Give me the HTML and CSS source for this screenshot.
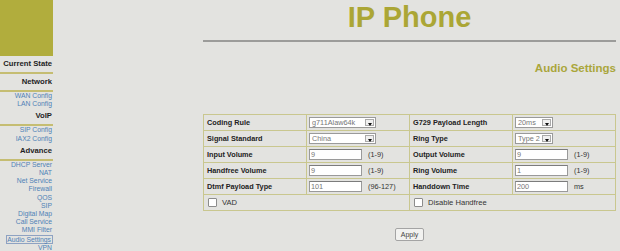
FILE: index.html
```html
<!doctype html>
<html>
<head>
<meta charset="utf-8">
<title>IP Phone</title>
<link rel="stylesheet" href="styles.css">
</head>

<body>
	<div class="page">
		<div class="side">
			<div class="logo"></div>
			<div class="head">Current State</div>
			<div class="head">Network</div>
			<ul class="links">
				<li><a href="javascript:;">WAN Config</a></li>
				<li><a href="javascript:;">LAN Config</a></li>
			</ul>
			<div class="head">VoIP</div>
			<ul class="links">
				<li><a href="javascript:;">SIP Config</a></li>
				<li><a href="javascript:;">IAX2 Config</a></li>
			</ul>
			<div class="head">Advance</div>
			<ul class="links">
				<li><a href="javascript:;">DHCP Server</a></li>
				<li><a href="javascript:;">NAT</a></li>
				<li><a href="javascript:;">Net Service</a></li>
				<li><a href="javascript:;">Firewall</a></li>
				<li><a href="javascript:;">QOS</a></li>
				<li><a href="javascript:;">SIP</a></li>
				<li><a href="javascript:;">Digital Map</a></li>
				<li><a href="javascript:;">Call Service</a></li>
				<li><a href="javascript:;">MMI Filter</a></li>
				<li><a href="javascript:;" class="on">Audio Settings</a></li>
				<li><a href="javascript:;">VPN</a></li>
			</ul>
		</div>
		<div class="main">
			<h1 class="title">IP Phone</h1>
			<div class="rule"></div>
			<h2 class="sub">Audio Settings</h2>
			<table class="form">
				<tr>
					<th>Coding Rule</th>
					<td><span class="sel w67"><span class="val">g711Alaw64k</span><span class="arr"></span></span></td>
					<th>G729 Payload Length</th>
					<td><span class="sel w38"><span class="val">20ms</span><span class="arr"></span></span></td>
				</tr>
				<tr>
					<th>Signal Standard</th>
					<td><span class="sel w67"><span class="val">China</span><span class="arr"></span></span></td>
					<th>Ring Type</th>
					<td><span class="sel w38"><span class="val">Type 2</span><span class="arr"></span></span></td>
				</tr>
				<tr>
					<th>Input Volume</th>
					<td><input class="txt" type="text" value="9"><span class="hint">(1-9)</span></td>
					<th>Output Volume</th>
					<td><input class="txt" type="text" value="9"><span class="hint">(1-9)</span></td>
				</tr>
				<tr>
					<th>Handfree Volume</th>
					<td><input class="txt" type="text" value="9"><span class="hint">(1-9)</span></td>
					<th>Ring Volume</th>
					<td><input class="txt" type="text" value="1"><span class="hint">(1-9)</span></td>
				</tr>
				<tr>
					<th>Dtmf Payload Type</th>
					<td><input class="txt" type="text" value="101"><span class="hint">(96-127)</span></td>
					<th>Handdown Time</th>
					<td><input class="txt" type="text" value="200"><span class="hint">ms</span></td>
				</tr>
				<tr>
					<td colspan="2" class="chk"><span class="box"></span>VAD</td>
					<td colspan="2" class="chk"><span class="box"></span>Disable Handfree</td>
				</tr>
			</table>
			<div class="actions"><button class="btn" type="button">Apply</button></div>
		</div>
	</div>
</body>
</html>
```

FILE: styles.css
```css
*{margin:0; padding:0; list-style:none; box-sizing:border-box;}
body{background:#e3e3e0; font-family:"Liberation Sans", Arial, sans-serif; overflow:hidden;}
.page{display:flex; width:620px; height:251px;}

.side{width:53px; flex:none;}
.logo{height:56px; background:#b1ad3d;}
.head{height:18px; line-height:16px; border-bottom:2px solid #c5bd72; text-align:right; padding-right:1px; font-size:7.7px; font-weight:bold; color:#1e1e1e;}
.links{text-align:right; font-size:6.8px; line-height:8.2px;}
.links a{color:#4f82b6; text-decoration:none; padding-right:1px;}
.links a.on{border:1px solid #8ea2c2; padding:0 1px 0 0; display:inline-block; line-height:7px;}

.main{flex:1; margin:0 4px 0 150px;}
.title{padding-top:3px; line-height:29px; height:32px; text-align:center; font-size:29px; font-weight:bold; color:#aba635;}
.rule{margin-top:8px; height:2px; background:#9c9c9a;}
.sub{margin-top:19px; line-height:14px; text-align:right; font-size:11.5px; font-weight:bold; color:#aaa63b;}

.form{margin-top:39px; width:100%; border-collapse:collapse; table-layout:fixed; font-size:7.3px; color:#222;}
.form th,.form td{height:16px; border:1px solid #c9c78f; vertical-align:middle; text-align:left; white-space:nowrap;}
.form th{padding-left:3px; font-weight:bold;}
.form td{padding-left:2px;}

.sel{display:inline-flex; height:11px; border:1px solid #9a9a9a; background:#fff; vertical-align:middle;}
.sel .val{flex:1; padding-left:2px; line-height:9px; color:#777; font-size:7.3px;}
.sel .arr{width:9px; margin:1px; border:1px solid #aaa; background:#f0f0f0; position:relative;}
.sel .arr:after{content:''; position:absolute; left:2px; top:3px; border:2px solid transparent; border-top:3px solid #111; border-bottom:0;}
.w67{width:67px;}
.w38{width:38px;}

.txt{width:53px; height:11px; border:1px solid #9a9a9a; border-top-color:#7c7c7c; background:#fff; padding-left:1px; font:7.3px "Liberation Sans", Arial, sans-serif; color:#777; vertical-align:middle; outline:none;}
.hint{margin-left:6px; color:#333; vertical-align:middle;}

.form td.chk{padding-left:4px; font-size:7.6px; color:#333;}
.box{display:inline-block; width:9px; height:9px; margin-right:5px; border:1px solid #8c8c8c; background:#fff; vertical-align:middle; border-radius:1px;}

.actions{margin-top:12px; text-align:center;}
.btn{width:29px; height:13px; border:1px solid #a4a4a4; border-radius:2px; background:#f2f2f0; font:7px "Liberation Sans", Arial, sans-serif; color:#444;}
```
